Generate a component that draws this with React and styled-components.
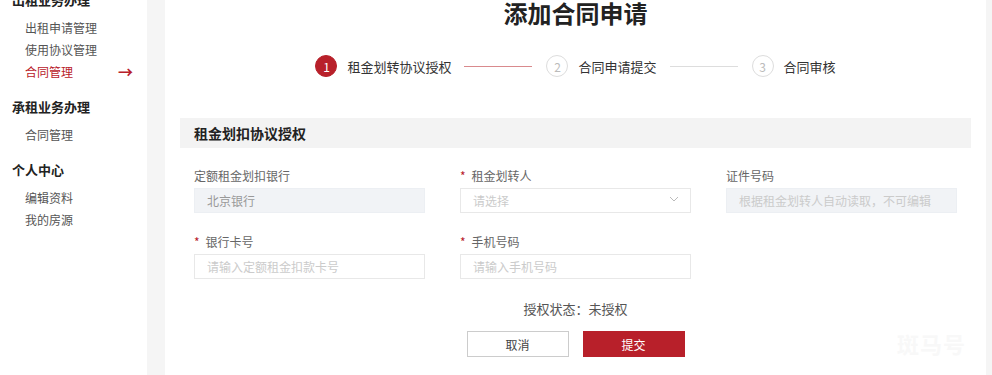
import React from 'react';
import styled, { createGlobalStyle } from 'styled-components';

const GlobalStyle = createGlobalStyle`
  html, body {
    margin: 0;
    padding: 0;
    background: #f5f5f5;
    font-family: "Noto Sans CJK SC", "Noto Sans", sans-serif;
    overflow: hidden;
  }
  * { box-sizing: border-box; }
`;

const RED = '#b8202a';

const Page = styled.div`
  display: flex;
  height: 375px;
  overflow: hidden;
`;

const Sidebar = styled.div`
  width: 147px;
  flex-shrink: 0;
  background: #fff;
  margin-right: 18px;
`;

const Section = styled.div`
  margin-top: ${({ $first }) => ($first ? '-14px' : '10px')};
`;

const SectionTitle = styled.div`
  padding-left: 12px;
  font-size: 13px;
  font-weight: 700;
  line-height: 28px;
  color: #222;
  margin-bottom: 3px;
`;

const NavItem = styled.div`
  display: flex;
  align-items: center;
  justify-content: space-between;
  padding: 0 14px 0 25px;
  font-size: 12px;
  line-height: 22px;
  color: ${({ $active }) => ($active ? RED : '#555')};
`;

const Arrow = styled.span`
  font-size: 15px;
  font-weight: 700;
  color: ${RED};
  line-height: 22px;
`;

const Main = styled.div`
  width: 821px;
  flex-shrink: 0;
  background: #fff;
  position: relative;
`;

const Title = styled.h1`
  margin: 0;
  text-align: center;
  font-size: 24px;
  line-height: 25px;
  font-weight: 700;
  color: #222;
`;

const Steps = styled.div`
  display: flex;
  align-items: center;
  justify-content: center;
  margin-top: 30px;
  height: 22px;
`;

const Step = styled.div`
  display: flex;
  align-items: center;
  gap: 10px;
  font-size: 13px;
  color: #333;
`;

const Circle = styled.span`
  width: 22px;
  height: 22px;
  border-radius: 50%;
  display: flex;
  align-items: center;
  justify-content: center;
  font-size: 12px;
  background: ${({ $active }) => ($active ? RED : '#fff')};
  color: ${({ $active }) => ($active ? '#fff' : '#bbb')};
  border: 1px solid ${({ $active }) => ($active ? RED : '#ddd')};
`;

const Line = styled.span`
  width: 68px;
  height: 1px;
  margin: 0 14px 0 13px;
  background: ${({ $active }) => ($active ? '#d98a8d' : '#ddd')};
`;

const Panel = styled.div`
  margin: 41px 15px 0;
`;

const PanelHeader = styled.div`
  height: 30px;
  background: #f3f3f3;
  padding-left: 14px;
  display: flex;
  align-items: center;
  font-size: 14px;
  font-weight: 700;
  color: #222;
`;

const FormGrid = styled.div`
  display: grid;
  grid-template-columns: repeat(3, 231px);
  column-gap: 35px;
  row-gap: 22px;
  padding: 20px 0 0 14px;
`;

const Field = styled.div`
  display: flex;
  flex-direction: column;
  gap: 3px;
`;

const Label = styled.label`
  font-size: 12px;
  line-height: 16px;
  color: #666;
`;

const Star = styled.span`
  color: ${RED};
  margin-right: 6px;
`;

const InputWrap = styled.div`
  position: relative;
  height: 25px;
`;

const Input = styled.input`
  width: 100%;
  height: 25px;
  border: 1px solid ${({ $disabled }) => ($disabled ? '#eceff3' : '#e8e8e8')};
  background: ${({ $disabled }) => ($disabled ? '#f1f3f6' : '#fff')};
  padding: 0 12px;
  font-family: inherit;
  font-size: 12px;
  color: #999;
  outline: none;
  &::placeholder {
    color: #cbcbcb;
  }
`;

const Chevron = styled.svg`
  position: absolute;
  right: 12px;
  top: 9px;
`;

const Status = styled.div`
  margin-top: 23px;
  text-align: center;
  font-size: 13px;
  line-height: 16px;
  color: #555;
`;

const Buttons = styled.div`
  display: flex;
  justify-content: center;
  gap: 14px;
  margin-top: 14px;
`;

const Button = styled.button`
  width: 102px;
  height: 26px;
  font-family: inherit;
  font-size: 12px;
  border: 1px solid ${({ $primary }) => ($primary ? RED : '#ccc')};
  background: ${({ $primary }) => ($primary ? RED : '#fff')};
  color: ${({ $primary }) => ($primary ? '#fff' : '#444')};
`;

const Watermark = styled.div`
  position: absolute;
  right: 20px;
  bottom: 16px;
  font-size: 22px;
  font-weight: 700;
  color: #f8f8f8;
  letter-spacing: 1px;
`;

const nav = [
  { title: '出租业务办理', items: ['出租申请管理', '使用协议管理', '合同管理'], active: 2 },
  { title: '承租业务办理', items: ['合同管理'] },
  { title: '个人中心', items: ['编辑资料', '我的房源'] },
];

const steps = ['租金划转协议授权', '合同申请提交', '合同审核'];

const fields = [
  { label: '定额租金划扣银行', value: '北京银行', disabled: true },
  { label: '租金划转人', required: true, placeholder: '请选择', select: true },
  { label: '证件号码', placeholder: '根据租金划转人自动读取，不可编辑', disabled: true },
  { label: '银行卡号', required: true, placeholder: '请输入定额租金扣款卡号' },
  { label: '手机号码', required: true, placeholder: '请输入手机号码' },
];

const App = () => {
  return (
    <>
      <GlobalStyle />
      <Page>
        <Sidebar>
          {nav.map((s, i) => (
            <Section key={s.title} $first={i === 0}>
              <SectionTitle>{s.title}</SectionTitle>
              {s.items.map((it, j) => (
                <NavItem key={it} $active={s.active === j}>
                  {it}
                  {s.active === j && <Arrow>→</Arrow>}
                </NavItem>
              ))}
            </Section>
          ))}
        </Sidebar>
        <Main>
          <Title>添加合同申请</Title>
          <Steps>
            {steps.map((s, i) => (
              <React.Fragment key={s}>
                <Step>
                  <Circle $active={i === 0}>{i + 1}</Circle>
                  {s}
                </Step>
                {i < steps.length - 1 && <Line $active={i === 0} />}
              </React.Fragment>
            ))}
          </Steps>
          <Panel>
            <PanelHeader>租金划扣协议授权</PanelHeader>
            <FormGrid>
              {fields.map((f) => (
                <Field key={f.label}>
                  <Label>
                    {f.required && <Star>*</Star>}
                    {f.label}
                  </Label>
                  <InputWrap>
                    <Input
                      readOnly
                      $disabled={f.disabled}
                      defaultValue={f.value}
                      placeholder={f.placeholder}
                    />
                    {f.select && (
                      <Chevron width="10" height="6" viewBox="0 0 10 6">
                        <path d="M1 1l4 4 4-4" fill="none" stroke="#bbb" strokeWidth="1" />
                      </Chevron>
                    )}
                  </InputWrap>
                </Field>
              ))}
            </FormGrid>
            <Status>授权状态：未授权</Status>
            <Buttons>
              <Button>取消</Button>
              <Button $primary>提交</Button>
            </Buttons>
          </Panel>
          <Watermark>斑马号</Watermark>
        </Main>
      </Page>
    </>
  );
};

export default App;
